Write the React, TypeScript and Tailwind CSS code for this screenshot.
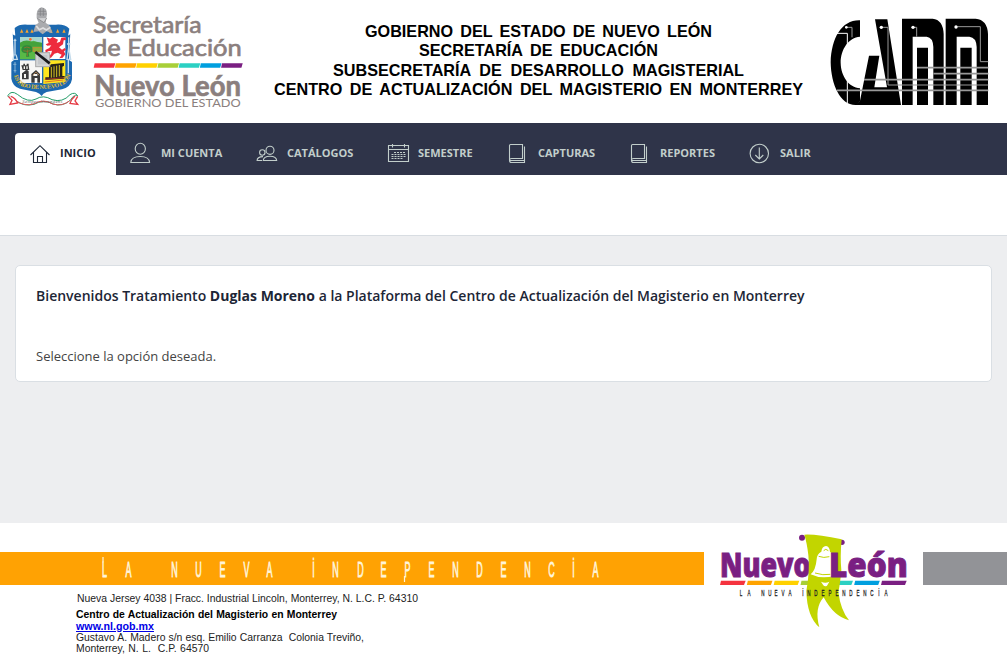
import React from "react";

const RAINBOW = ["#f5333f", "#ffa300", "#ffd100", "#a8cf38", "#2bd0c3", "#009fdf", "#7a1f82"];

function StateShield() {
  return (
    <g>
      <path d="M38 96 Q36 108 50 106 L60 90 Q64 80 78 84 L170 84 Q186 80 190 90 L200 106 Q212 108 211 96 L207 180 L216 186 V238 Q212 262 186 268 L140 276 Q128 280 125 288 Q120 280 108 276 L60 266 Q38 260 34 236 V186 L42 180Z" fill="#1c69b0" />
      <path d="M44 84 Q58 72 82 74 H168 Q194 72 208 86 L204 108 H46Z" fill="#1c69b0" />
      <rect x="60" y="111" width="66" height="67" fill="#58b947" />
      <path d="M60 111 H126 V130 L100 122 L84 132 L60 128Z" fill="#a6d5cf" />
      <path d="M60 128 Q76 118 92 124 L126 128 V140 H60Z" fill="#43a23b" />
      <path d="M64 150 Q64 138 78 136 Q96 134 98 146 Q100 158 86 158 L88 170 H78 L80 160 Q66 160 64 150Z" fill="#2f8a3a" />
      <path d="M72 144 q8 -6 18 0 M70 152 q10 4 22 0 M82 148v20" stroke="#b26a31" strokeWidth="2" fill="none" />
      <path d="M99 142 h26 v12 h-26Z" fill="#85b33a" stroke="#dd812f" strokeWidth="2" />
      <circle cx="91" cy="118" r="4" fill="#ff6c22" />
      <rect x="130" y="111" width="66" height="66" fill="#fff" />
      <path d="M140 112 l10 4 l8 -5 l16 8 l-4 10 l10 -4 l4 -12 l12 -1 l3 8 l-8 1 l-2 12 l-12 9 l9 7 l8 -5 l4 5 l-6 5 l4 9 l-8 10 l-10 2 l7 -11 l-12 -6 l-10 3 l-10 12 l-12 2 l3 -7 l9 -5 l3 -11 l-12 2 l-7 6 l-1 -10 l12 -6 l6 -8 l-12 1 l-5 -4 l9 -4Z" fill="#ee2b3d" />
      <rect x="60" y="181" width="66" height="68" fill="#f7f7f5" />
      <path d="M64 196h6v-5h5v5h5v-5h6v5l2 14h-20Z M74 214 q6 -8 12 0v24h-20v-18Z M94 222l14 -12 12 12v26h-8v-14h-8v14h-10Z" fill="#3a3a3a" />
      <path d="M71 199h4v8h-4Z M79 199h4v8h-4Z M72 222h6v12h-6Z M100 222h12v6h-12Z" fill="#f5f5f1" />
      <path d="M98 226l10 -10 10 10" stroke="#d59c58" strokeWidth="2" fill="none" />
      <path d="M130 181 H196 V246 L130 252Z" fill="#ffe51d" />
      <path d="M147 201 l6 -8 39 -4 v8 l-5 3 v28 h7 v8 l-58 4 v-8 h11Z" fill="#28251b" />
      <path d="M154 201v32 M162 199v33 M170 197v34 M178 195v34" stroke="#f8de24" strokeWidth="2.500" />
      <path d="M134 238 L194 233 M134 246 L190 240" stroke="#d23c2d" strokeWidth="2" />
      <rect x="107" y="158" width="42" height="42" fill="#d3d5d6" stroke="#aaa" strokeWidth="3" />
      <rect x="114" y="165" width="28" height="28" fill="#c4c7ca" />
      <path d="M106 156 L149 190" stroke="#191a1c" strokeWidth="8" />
      <path d="M45 116v50 M41 121h8 M42 164l-3 14h13l-4 -14" stroke="#c4dbeb" strokeWidth="4" fill="none" />
      <path d="M206 112v34 M201 132h10 M206 142l-5 36h11Z M205 180v40" stroke="#c4dbeb" strokeWidth="4" fill="none" />
      <path d="M45 186v32 M40 193h9 M41 212h8" stroke="#86b3d4" strokeWidth="3" />
      <g fill="#f7a42f">
        <path d="M60 98l5 -11 5 11Z M76 98l5 -11 5 11Z M91 98l5 -11 5 11Z M148 98l5 -11 5 11Z M168 98l5 -11 5 11Z M187 98l5 -11 5 11Z" />
      </g>
      <path id="shield-motto" d="M42 226 Q50 262 92 265 Q126 270 160 264 Q206 258 214 216" fill="none" />
      <text fontFamily="Liberation Serif" fontWeight="700" fontSize="18" fill="#e0b92c">
        <textPath href="#shield-motto" textLength="206">ESTADO DE NUEVO LEÓN</textPath>
      </text>
      <path d="M100 96 L106 76 L116 68 L110 54 Q108 26 124 22 Q142 24 141 42 L137 68 L150 78 L157 100 L140 94 L128 103 L116 94Z" fill="#aaabae" />
      <path d="M114 34 h24 M112 42h28 M121 24v24 M130 24v24" stroke="#7f8184" strokeWidth="2" />
      <path d="M112 55 L132 68 L140 54" fill="#d1d2d4" stroke="#777" strokeWidth="2" />
      <path d="M109 78 L118 89 L129 84 L139 90 L151 82" stroke="#dfdfe0" strokeWidth="5" fill="none" />
      <path d="M24 286 Q34 270 52 283 Q84 310 108 297 Q130 283 156 299 Q188 309 210 284 Q225 274 233 288 Q219 284 213 299 Q188 322 159 312 Q131 296 102 313 Q69 321 44 299 Q33 285 24 290Z" fill="#fff" stroke="#229d68" strokeWidth="3" />
      <path d="M25 289 l11 12 l-6 12 l23 -4 q-6 -14 -20 -20 M233 289 l-8 14 l8 10 l-23 -3 q4 -13 15 -22" fill="#fff" stroke="#e63c46" strokeWidth="4" />
      <path d="M47 302 Q76 321 103 311 Q131 295 158 312 Q186 320 208 303" fill="none" stroke="#e7535a" strokeWidth="3" />
      <text x="67" y="308" fontSize="14" fontStyle="italic" fontFamily="Liberation Serif" fill="#666" textLength="120">Semper Ascendens</text>
    </g>
  );
}

function MinistryLogo() {
  return (
    <svg className="h-[120px] w-[250px] shrink-0" viewBox="0 0 750 360">
      <StateShield />
      <g fontFamily="Lato" fill="#8b7f7e" stroke="#8b7f7e">
        <text x="279" y="100" fontSize="69" strokeWidth="2" textLength="326" lengthAdjust="spacingAndGlyphs">Secretaría</text>
        <text x="279" y="168" fontSize="69" strokeWidth="2" textLength="446" lengthAdjust="spacingAndGlyphs">de Educación</text>
        <text x="283" y="289" fontSize="84" fontWeight="700" strokeWidth="2" textLength="440" lengthAdjust="spacingAndGlyphs">Nuevo León</text>
        <text x="285" y="322" fontSize="36" strokeWidth="0" textLength="437" lengthAdjust="spacingAndGlyphs">GOBIERNO DEL ESTADO</text>
      </g>
      {RAINBOW.map((color, i) => (
        <path key={color} d="M3 0H65L61 13H0Z" transform={`translate(${281 + i * 63.700} 190)`} fill={color} />
      ))}
    </svg>
  );
}

function CammLogo() {
  return (
    <svg className="h-[115px] w-[187px] shrink-0" viewBox="0 0 561 345" role="img" aria-label="CAMM">
      <g fill="#000">
        <path d="M120 46V95C86 98 62 132 62 174C63 214 86 247 120 250V288L111 300C62 304 33 240 32 172C34 98 66 44 120 46Z" />
        <path d="M165 43H202L243 300H108L120 287L147 152H178L163 247H201Z" />
        <path d="M246 41H338Q369 44 371 87V300H340V126Q339 97 320 95H278V300H246Z" />
        <path d="M291 128h33v172h-33Z M421 128h34v172h-34Z" />
        <path d="M377 41H467Q502 44 504 87V300H470V126Q469 97 448 95H410V300H377Z" />
      </g>
      <path d="M48 85H82V296" fill="none" stroke="#fff" strokeWidth="3" />
      <g fill="none" stroke="#999" strokeWidth="3">
        <path d="M79 67H96V97 M181 67H204V240H505 M278 67H290V95 M408 65H481V170H505" />
        <path d="M291 188H505 M340 206H505 M132 224H505 M51 256H505" strokeWidth="5" />
      </g>
      <g fill="#fff">
        <circle cx="79" cy="67" r="4" />
        <circle cx="184" cy="67" r="5" />
        <circle cx="279" cy="67" r="5" />
        <circle cx="408" cy="66" r="5" />
      </g>
    </svg>
  );
}

type IconName = "home" | "user" | "users" | "calendar" | "book" | "exit";

const ICONS: Record<IconName, React.ReactNode> = {
  home: <path d="M0.5 12 10 2.7 19.5 12M3.5 9.5V19.5H16.5V9.5M7.5 19.5V13.5H12.5V19.5" />,
  user: (
    <>
      <ellipse cx="9.3" cy="5.8" rx="5.1" ry="5.5" />
      <path d="M-.2 19.5C.1 15.8 3.8 13.5 9.3 13.5s9 2.3 9.3 6Z" />
    </>
  ),
  users: (
    <>
      <ellipse cx="13" cy="7.3" rx="4" ry="4.1" />
      <path d="M6.2 17.5c.2-2.8 2.6-4.3 6.8-4.3s6.5 1.5 6.7 4.3Z" />
      <circle cx="5.3" cy="9.5" r="2.7" />
      <path d="M5 17.5H.1c0-2.3 1.7-3.8 5.9-3.9" />
    </>
  ),
  calendar: (
    <>
      <path d="M.5 2.5h20v16h-20ZM.5 6.500h20M4.500 1v3.500M16.500 1v3.500" />
      <path d="M6 9.500h12M3.500 11.500h15M3.500 13.500h15M3.500 15.500h12" strokeDasharray="2 1" />
    </>
  ),
  book: (
    <path d="M2.5 1.5H14.5V15.5H3.5Q1.5 15.5 1.5 17.5V2.5Q1.5 1.5 2.5 1.5ZM1.5 17.5Q1.5 19.5 3.5 19.5H16.5V3.5M2 17.5H16.5" />
  ),
  exit: (
    <>
      <circle cx="9.3" cy="10.5" r="9.2" />
      <path d="M9.3 4.5V16M5.3 12 9.3 16 13.3 12" />
    </>
  ),
};

const MENU: { label: string; icon: IconName; width: string }[] = [
  { label: "INICIO", icon: "home", width: "w-[101px]" },
  { label: "MI CUENTA", icon: "user", width: "w-[126px]" },
  { label: "CATÁLOGOS", icon: "users", width: "w-[131px]" },
  { label: "SEMESTRE", icon: "calendar", width: "w-[120px]" },
  { label: "CAPTURAS", icon: "book", width: "w-[122px]" },
  { label: "REPORTES", icon: "book", width: "w-[120px]" },
  { label: "SALIR", icon: "exit", width: "w-[96px]" },
];

function NavBar() {
  return (
    <nav className="flex h-[52px] items-end bg-[#2f3449] pl-[15px]">
      {MENU.map((item, i) => (
        <a
          key={item.label}
          href="#"
          className={`flex h-[42px] shrink-0 items-center gap-[10px] rounded-t pb-[2px] pl-[15px] text-[11px] font-bold whitespace-nowrap ${item.width} ${
            i === 0 ? "bg-white text-[#1d2636]" : "text-[#c2cecb]"
          }`}
        >
          <svg className="size-5 shrink-0 overflow-visible" viewBox="0 0 20 20" fill="none" stroke="currentColor" strokeWidth="1.1">
            {ICONS[item.icon]}
          </svg>
          {item.label}
        </a>
      ))}
    </nav>
  );
}

const SLOGAN = "LA NUEVA İNDEPENDENCİA";
const BANNER_X = [104, 128, 151, 174, 198, 222, 246, 269, 291, 313, 335, 360, 383, 407, 431, 455, 479, 503, 527, 551, 573, 595];
const TAG_X = [741, 749, 756, 763, 770, 776, 783, 790, 797, 803, 809, 816, 823, 830, 837, 844, 851, 858, 865, 872, 879, 886];

function FooterBanner() {
  return (
    <div className="flex h-[33px] w-[704px] shrink-0 bg-[#ffa203]">
      <svg className="h-[33px] w-[704px]" viewBox="0 0 704 33">
        <g transform="scale(.4 1)">
          <text x={BANNER_X.map((x) => (x + 0.5) / 0.4).join(" ")} y="25.500" textAnchor="middle" fontFamily="Liberation Sans" fontSize="22.500" fill="#fff5da" stroke="#fff5da" strokeWidth=".9">
            {SLOGAN}
          </text>
        </g>
        <path d="M103 5V10M404.500 24V30" stroke="#fff5da" strokeWidth="1.200" />
      </svg>
    </div>
  );
}

function BellLogo() {
  return (
    <svg className="h-[120px] w-[219px] shrink-0" viewBox="12 0 657 360">
      <text x="60" y="172" fontSize="103" fontFamily="Open Sans" fontWeight="800" fill="#7a1f82" stroke="#7a1f82" strokeWidth="3" textLength="272" lengthAdjust="spacingAndGlyphs">Nuevo</text>
      {RAINBOW.map((color, i) => (
        <path key={color} d="M3 0H77L72 13H0Z" transform={`translate(${60 + i * 80.5} 182)`} fill={color} />
      ))}
      <g fill="#7a1f82">
        <circle cx="306" cy="53" r="9" />
        <circle cx="426" cy="67" r="8" />
      </g>
      <path d="M313 44 Q350 42 425 58 Q420 110 424 150 Q421 188 415 216 Q422 271 447 301 Q402 290 371 232 Q342 264 358 322 Q321 291 319 213 Q330 151 325 105 Q321 69 313 44Z" fill="#c2d500" />
      <path d="M332 163 Q347 151 350 118 Q351 101 364 95 Q366 79 378 78 Q389 80 390 95 Q400 102 403 119 V168 Q362 178 332 163Z" fill="#fff" />
      <path d="M345 159Q369 167 391 163 M356 109Q371 115 388 110 M371 92Q377 84 385 92" fill="none" stroke="#c2d500" strokeWidth="3" />
      <path d="M363 185Q376 191 388 185L381 197Q375 201 370 196Z" fill="#fff" />
      <text x="387" y="172" fontSize="103" fontFamily="Open Sans" fontWeight="800" fill="#7a1f82" stroke="#7a1f82" strokeWidth="3" textLength="236" lengthAdjust="spacingAndGlyphs">León</text>
      <g transform="scale(.5 1)">
        <text x={TAG_X.map((x) => ((x - 700) * 3) / 0.5).join(" ")} y="227" textAnchor="middle" fontFamily="Liberation Sans" fontSize="27" fill="#222" stroke="#222">
          {SLOGAN}
        </text>
      </g>
    </svg>
  );
}

export default function App() {
  return (
    <div className="flex h-[667px] w-[1007px] flex-col overflow-hidden bg-white font-['Open_Sans',sans-serif]">
      <header className="flex h-[123px] shrink-0 items-start">
        <MinistryLogo />
        <div className="mt-[22px] ml-px flex w-[575px] flex-col items-center text-[16.2px] leading-[19.3px] font-bold whitespace-nowrap text-black font-['Liberation_Sans',sans-serif]">
          <p className="w-[347px] [text-align-last:justify]">GOBIERNO DEL ESTADO DE NUEVO LEÓN</p>
          <p className="w-[239px] [text-align-last:justify]">SECRETARÍA DE EDUCACIÓN</p>
          <p className="w-[411px] [text-align-last:justify]">SUBSECRETARÍA DE DESARROLLO MAGISTERIAL</p>
          <p className="w-[529px] [text-align-last:justify]">CENTRO DE ACTUALIZACIÓN DEL MAGISTERIO EN MONTERREY</p>
        </div>
        <div className="-ml-[6px] pt-[5px]">
          <CammLogo />
        </div>
      </header>
      <NavBar />
      <div className="h-[61px] shrink-0 border-b border-[#d8dde2] bg-white" />
      <main className="h-[287px] shrink-0 bg-[#edeef0] px-[15px] pt-[29px]">
        <section className="h-[117px] rounded-[5px] border border-[#dadfe4] bg-white px-5 pt-5">
          <h1 className="text-[14px] leading-5 font-semibold whitespace-nowrap text-[#1d2636]">
            Bienvenidos Tratamiento <b className="font-bold">Duglas Moreno</b> a la Plataforma del Centro de Actualización del Magisterio en Monterrey
          </h1>
          <p className="mt-10 text-[13px] leading-5 text-[#444]">Seleccione la opción deseada.</p>
        </section>
      </main>
      <footer className="flex h-[144px] shrink-0 items-start bg-white">
        <div className="flex w-[704px] flex-col pt-[29px]">
          <FooterBanner />
          <address className="ml-[77px] pt-[8px] text-[10.4px] leading-[11.3px] whitespace-nowrap text-[#222] not-italic font-['Liberation_Sans',sans-serif]">
            <p className="w-[341px] [text-align-last:justify]">Nueva Jersey 4038 | Fracc. Industrial Lincoln, Monterrey, N. L.C. P. 64310</p>
            <p className="mt-[5px] -ml-px w-[261px] font-bold text-black [text-align-last:justify]">Centro de Actualización del Magisterio en Monterrey</p>
            <p className="-ml-px text-[10.7px]"><a href="#" className="font-bold text-[#0000e6] underline">www.nl.gob.mx</a></p>
            <p className="-ml-px w-[288px] [text-align-last:justify]">Gustavo A. Madero s/n esq. Emilio Carranza&nbsp; Colonia Treviño,</p>
            <p className="-ml-px w-[133px] [text-align-last:justify]">Monterrey, N. L.&nbsp; C.P. 64570</p>
          </address>
        </div>
        <div className="-mt-[3px]">
          <BellLogo />
        </div>
        <div className="mt-[29px] h-[33px] flex-1 bg-[#929397]" />
      </footer>
    </div>
  );
}
